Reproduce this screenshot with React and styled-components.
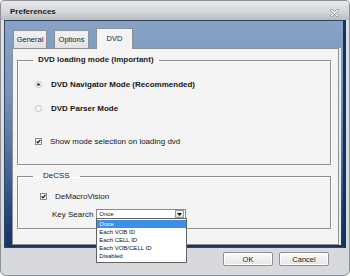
import React from "react";
import styled, { createGlobalStyle } from "styled-components";

const GlobalStyle = createGlobalStyle`
  html, body {
    margin: 0;
    padding: 0;
    background: #ffffff;
  }
  body {
    font-family: "Liberation Sans", Arial, sans-serif;
    font-size: 8px;
    color: #111;
  }
  #root {
    width: 350px;
    height: 276px;
  }
`;

export default function App() {
  return (
    <>
      <GlobalStyle />
      <Window>
        <TitleBar>
          <Title>Preferences</Title>
          <CloseIcon width="9" height="8" viewBox="0 0 9 8">
            <path d="M1.5 1.2 L7.5 6.8 M7.5 1.2 L1.5 6.8" stroke="#8a8f96" strokeWidth="2.6" strokeLinecap="round" />
            <path d="M1.5 1.2 L7.5 6.8 M7.5 1.2 L1.5 6.8" stroke="#ffffff" strokeWidth="1.2" strokeLinecap="round" />
          </CloseIcon>
        </TitleBar>

        <BluePanel>
          <TabsRow>
            <Tab $w={34}>General</Tab>
            <Tab $w={35}>Options</Tab>
            <Tab $w={37} $active>DVD</Tab>
          </TabsRow>
          <TabPanel>
            <Group $h={110}>
              <Legend $bold $pad={5} $ml={15}>DVD loading mode (Important)</Legend>
              <GroupBody $pt={13} $pl={17}>
                <OptionRow>
                  <Radio checked />
                  <OptionLabel $bold>DVD Navigator Mode (Recommended)</OptionLabel>
                </OptionRow>
                <OptionRow $mt={12}>
                  <Radio />
                  <OptionLabel $bold>DVD Parser Mode</OptionLabel>
                </OptionRow>
                <OptionRow $mt={21}>
                  <Check />
                  <OptionLabel>Show mode selection on loading dvd</OptionLabel>
                </OptionRow>
              </GroupBody>
            </Group>

            <Group $h={58}>
              <Legend $pad={10} $ml={15}>DeCSS</Legend>
              <GroupBody $pt={9} $pl={22}>
                <OptionRow>
                  <Check />
                  <OptionLabel>DeMacroVision</OptionLabel>
                </OptionRow>
                <KeyRow>
                  <KeyLabel>Key Search</KeyLabel>
                  <Combo>
                    <ComboValue>Once</ComboValue>
                    <ComboButton>
                      <svg width="5" height="3" viewBox="0 0 5 3">
                        <path d="M0 0 H5 L2.5 3 Z" fill="#111" />
                      </svg>
                    </ComboButton>
                    <DropList>
                      {["Once", "Each VOB ID", "Each CELL ID", "Each VOB/CELL ID", "Disabled"].map((item, i) => (
                        <DropItem key={item} $selected={i === 0}>
                          {item}
                        </DropItem>
                      ))}
                    </DropList>
                  </Combo>
                </KeyRow>
              </GroupBody>
            </Group>
          </TabPanel>
        </BluePanel>

        <ButtonRow>
          <Button>OK</Button>
          <Button>Cancel</Button>
        </ButtonRow>
      </Window>
    </>
  );
}

function Radio({ checked }) {
  return (
    <RadioIcon width="7" height="7" viewBox="0 0 7 7">
      <circle cx="3.5" cy="3.5" r="3" fill="#fafafa" stroke="#b4b4b4" strokeWidth="0.8" />
      {checked && <circle cx="3.5" cy="3.5" r="1.3" fill="#1a1a1a" />}
    </RadioIcon>
  );
}

function Check() {
  return (
    <CheckIcon width="7" height="7" viewBox="0 0 7 7">
      <rect x="0.5" y="0.5" width="6" height="6" fill="#fbfbfb" stroke="#8a8a8a" strokeWidth="1" />
      <path d="M1.6 3.4 L2.9 4.9 L5.4 1.9" fill="none" stroke="#111" strokeWidth="1.2" />
    </CheckIcon>
  );
}

const Window = styled.div`
  box-sizing: border-box;
  width: 350px;
  height: 276px;
  display: flex;
  flex-direction: column;
  border: 1px solid #8b8f95;
  border-radius: 4px 4px 6px 6px;
  background: linear-gradient(#dfe1e3, #d6d8db);
  overflow: hidden;
`;

const TitleBar = styled.div`
  height: 19px;
  display: flex;
  align-items: center;
  justify-content: space-between;
  padding: 0 10px 0 9px;
  background: linear-gradient(#e6e8ea 0%, #d3d6d9 60%, #b7bcc2 100%);
`;

const Title = styled.div`
  font-weight: bold;
  font-size: 8px;
  color: #1a1a1a;
  padding-top: 1px;
`;

const CloseIcon = styled.svg`
  display: block;
  margin-top: 4px;
`;

const BluePanel = styled.div`
  box-sizing: border-box;
  height: 228px;
  margin: 0 3px 0 3px;
  display: flex;
  flex-direction: column;
  padding: 7px 4px 2px 7px;
  border: 1px solid #34455d;
  border-right: 3px solid #17325c;
  background: linear-gradient(#86a3c7 0%, #7895bc 30%, #4e6f9d 60%, #24467a 85%, #173463 100%);
`;

const TabsRow = styled.div`
  display: flex;
  align-items: flex-end;
  gap: 7px;
  height: 20px;
  padding-left: 1px;
  position: relative;
  z-index: 1;
`;

const Tab = styled.div`
  box-sizing: border-box;
  width: ${(p) => p.$w}px;
  height: ${(p) => (p.$active ? 21 : 18)}px;
  margin-bottom: ${(p) => (p.$active ? -1 : 0)}px;
  display: flex;
  align-items: center;
  justify-content: center;
  padding-bottom: ${(p) => (p.$active ? 2 : 0)}px;
  border: 1px solid #8e9194;
  border-bottom: none;
  background: ${(p) => (p.$active ? "#f4f4f4" : "linear-gradient(#f2f2f2, #e1e1e1)")};
  font-size: 7.5px;
  color: #222;
`;

const TabPanel = styled.div`
  box-sizing: border-box;
  flex: 1;
  display: flex;
  flex-direction: column;
  gap: 6px;
  padding: 6px 7px 0 4px;
  border: 1px solid #8e9194;
  background: #f4f4f4;
  box-shadow: 2px 0 0 #e9eef4;
`;

const Group = styled.fieldset`
  box-sizing: border-box;
  height: ${(p) => p.$h}px;
  margin: 0;
  padding: 0;
  border: 1px solid #8d8d8d;
  box-shadow: inset 1px 1px 0 #ffffff, 1px 1px 0 #ffffff;
  min-width: 0;
`;

const Legend = styled.legend`
  height: 10px;
  line-height: 10px;
  margin-left: ${(p) => p.$ml}px;
  padding: 0 ${(p) => p.$pad}px;
  font-size: 8px;
  font-weight: ${(p) => (p.$bold ? "bold" : "normal")};
  color: #1a1a1a;
`;

const GroupBody = styled.div`
  display: flex;
  flex-direction: column;
  padding-top: ${(p) => p.$pt}px;
  padding-left: ${(p) => p.$pl}px;
`;

const OptionRow = styled.div`
  display: flex;
  align-items: center;
  height: 12px;
  margin-top: ${(p) => p.$mt || 0}px;
`;

const RadioIcon = styled.svg`
  display: block;
  flex: none;
  margin-right: 9px;
`;

const CheckIcon = styled.svg`
  display: block;
  flex: none;
  margin-right: 8px;
`;

const OptionLabel = styled.span`
  font-size: 8px;
  font-weight: ${(p) => (p.$bold ? "bold" : "normal")};
  color: #151515;
  white-space: nowrap;
`;

const KeyRow = styled.div`
  display: flex;
  align-items: center;
  height: 12px;
  margin-top: 6px;
  margin-left: 12px;
`;

const KeyLabel = styled.span`
  font-size: 8px;
  color: #151515;
  margin-right: 3px;
  white-space: nowrap;
`;

const Combo = styled.div`
  box-sizing: border-box;
  position: relative;
  width: 90px;
  height: 11px;
  display: flex;
  align-items: center;
  justify-content: space-between;
  border: 1px solid #8a8a8a;
  background: #ffffff;
  padding: 0 1px 0 2px;
`;

const ComboValue = styled.span`
  font-size: 6px;
  color: #111;
`;

const ComboButton = styled.div`
  box-sizing: border-box;
  width: 9px;
  height: 8px;
  display: flex;
  align-items: center;
  justify-content: center;
  border: 1px solid #9a9a9a;
  background: linear-gradient(#f7f7f7, #dedede);
`;

const DropList = styled.div`
  box-sizing: border-box;
  position: absolute;
  top: 100%;
  left: -1px;
  width: 91px;
  margin-top: -1px;
  border: 1px solid #646464;
  background: #ffffff;
  padding: 1px 0 2px;
  z-index: 5;
`;

const DropItem = styled.div`
  height: 8px;
  line-height: 8px;
  padding-left: 2px;
  font-size: 6px;
  color: ${(p) => (p.$selected ? "#ffffff" : "#111")};
  background: ${(p) => (p.$selected ? "#3d8ee6" : "transparent")};
  white-space: nowrap;
`;

const ButtonRow = styled.div`
  display: flex;
  justify-content: flex-end;
  gap: 6px;
  padding: 4px 20px 0 0;
`;

const Button = styled.div`
  box-sizing: border-box;
  width: 50px;
  height: 14px;
  display: flex;
  align-items: center;
  justify-content: center;
  border: 1px solid #8c8f93;
  border-radius: 2px;
  background: linear-gradient(#fbfbfb, #e4e5e7);
  box-shadow: inset 0 0 0 1px #ffffff;
  font-size: 7.5px;
  color: #1a1a1a;
`;
